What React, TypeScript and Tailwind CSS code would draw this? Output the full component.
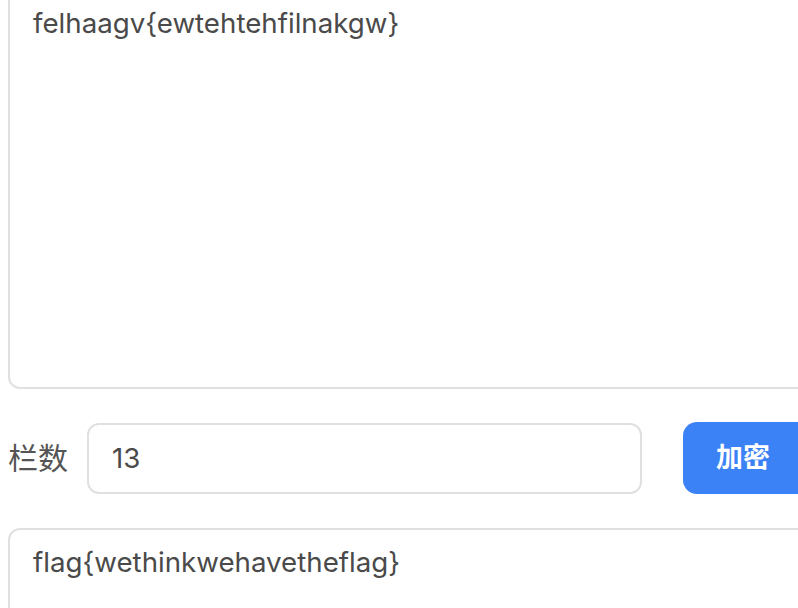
export default function App() {
  const font = { fontFamily: 'Inter, "Noto Sans CJK SC", sans-serif' };
  return (
    <div className="h-screen w-screen overflow-hidden bg-white" style={font}>
      <div className="w-[880px] -mt-[11px] pl-2 flex flex-col">
        <textarea
          readOnly
          value="felhaagv{ewtehtehfilnakgw}"
          className="h-[400px] w-full resize-none rounded-xl border-2 border-[#e0e0e0] px-[23px] py-3 text-[27.7px] leading-[1.5] text-[#4a4a4a] outline-none"
        />
        <div className="mt-[33px] flex items-center">
          <span className="text-[30px] text-[#555]">栏数</span>
          <input
            readOnly
            value="13"
            className="ml-[19px] h-[71px] w-[555px] rounded-xl border-2 border-[#e0e0e0] px-[23px] text-[27.7px] text-[#4a4a4a] outline-none"
          />
          <button className="ml-[41px] h-[72px] w-[150px] rounded-[14px] bg-[#3b82f6] text-[27px] font-bold text-white">
            <span className="pr-[30px]">加密</span>
          </button>
        </div>
        <textarea
          readOnly
          value="flag{wethinkwehavetheflag}"
          className="mt-[34px] h-[200px] w-full resize-none rounded-xl border-2 border-[#e0e0e0] px-[23px] py-3 text-[27.7px] leading-[1.5] text-[#4a4a4a] outline-none"
        />
      </div>
    </div>
  );
}
